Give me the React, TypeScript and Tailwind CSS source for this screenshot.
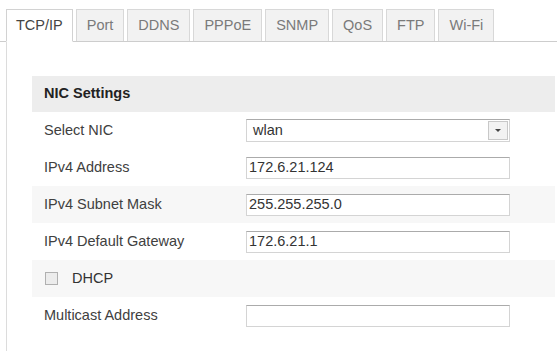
import React from "react";

const tabs = ["TCP/IP", "Port", "DDNS", "PPPoE", "SNMP", "QoS", "FTP", "Wi-Fi"];

function TextInput({ value }: { value: string }) {
  return (
    <div className="w-[264px] h-[22px] border border-[#d4d4d4] border-t-[#ababab] bg-white flex items-center pl-[2px] text-[14.5px] text-[#333] leading-none">
      {value}
    </div>
  );
}

function Row({ label, gray, children }: { label: React.ReactNode; gray?: boolean; children?: React.ReactNode }) {
  return (
    <div className={`h-[37px] flex items-center pl-[12px] ${gray ? "bg-[#f7f7f7]" : "bg-white"}`}>
      <div className="w-[202px] text-[14.5px] text-[#404040]">{label}</div>
      {children}
    </div>
  );
}

export default function App() {
  return (
    <div className="w-[557px] h-[351px] bg-white overflow-hidden font-['Liberation_Sans',Arial,sans-serif]">
      <div className="h-[42px] pt-[9px] pl-[6px] flex gap-[3px] border-b border-[#cdcdcd]">
        {tabs.map((t, i) => (
          <div
            key={t}
            className={
              i === 0
                ? "h-[33px] px-[9px] flex items-center bg-white border border-[#d2d2d2] border-b-white text-[14.5px] text-[#444] -mb-px"
                : "h-[32px] px-[10px] flex items-center bg-[#f2f2f2] border border-[#d8d8d8] border-b-0 text-[14.5px] text-[#7a7a7a]"
            }
          >
            {t}
          </div>
        ))}
      </div>
      <div className="ml-[6px] h-[309px] border-l border-[#dcdcdc] pl-[25px] pr-[2px] pt-[34px]">
        <div className="h-[36px] bg-[#ededed] flex items-center pl-[12px] text-[14.5px] font-bold text-[#222]">
          NIC Settings
        </div>
        <Row label="Select NIC">
          <div className="w-[264px] h-[23px] border border-[#d4d4d4] border-t-[#ababab] bg-white flex items-center justify-between pl-[6px] pr-[1px] text-[14.5px] text-[#333] leading-none">
            <span>wlan</span>
            <div className="w-[20px] h-[19px] border border-[#c8c8c8] bg-[#f2f2f2] flex items-center justify-center">
              <svg width="6" height="3" viewBox="0 0 6 3">
                <path d="M0 0 L6 0 L3 3 Z" fill="#444" />
              </svg>
            </div>
          </div>
        </Row>
        <Row label="IPv4 Address">
          <TextInput value="172.6.21.124" />
        </Row>
        <Row label="IPv4 Subnet Mask" gray>
          <TextInput value="255.255.255.0" />
        </Row>
        <Row label="IPv4 Default Gateway">
          <TextInput value="172.6.21.1" />
        </Row>
        <Row
          gray
          label={
            <div className="flex items-center">
              <div className="w-[13px] h-[13px] border border-[#b0b0b0] bg-[#ececec] ml-[1px]" />
              <span className="ml-[14px] text-[#333]">DHCP</span>
            </div>
          }
        />
        <Row label="Multicast Address">
          <TextInput value="" />
        </Row>
      </div>
    </div>
  );
}
